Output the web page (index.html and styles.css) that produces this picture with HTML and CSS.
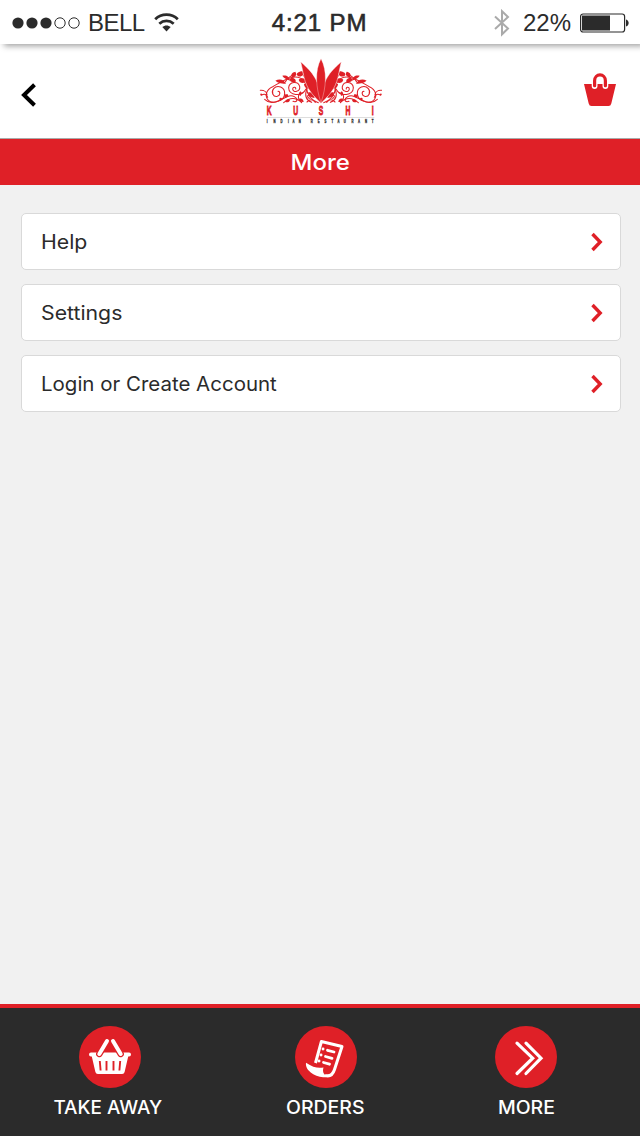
FILE: index.html
```html
<!DOCTYPE html>
<html lang="en">
<head>
<meta charset="utf-8">
<title>More</title>
<link rel="stylesheet" href="styles.css">
</head>
<body>
<div class="screen">
  <div class="status">
    <div class="status-left">
      <svg class="signal" width="68" height="14" viewBox="0 0 68 14"><g fill="#2b2b2b"><circle cx="6" cy="7" r="5.6"/><circle cx="20" cy="7" r="5.6"/><circle cx="34" cy="7" r="5.6"/></g><g fill="none" stroke="#2b2b2b"><circle cx="48" cy="7" r="5.2"/><circle cx="62" cy="7" r="5.2"/></g></svg>
      <span class="carrier">BELL</span>
      <svg class="wifi" width="25" height="20" viewBox="0 0 25 20"><g fill="none" stroke="#2b2b2b" stroke-width="2.8"><path d="M1.2 6.2C7.5.2 17.5.2 23.8 6.2"/><path d="M5.3 10.8C9.5 7 15.5 7 19.7 10.8"/></g><path fill="#2b2b2b" d="M8.3 14.1c2.4-2.2 6-2.2 8.4 0L12.5 18.6z"/></svg>
    </div>
    <span class="clock">4:21 PM</span>
    <div class="status-right">
      <svg width="16" height="28" viewBox="0 0 16 28"><path fill="none" stroke="#aaa" stroke-width="2" d="M1 7.5L14 19.5 8 25.3V2.2L14 8 1 20"/></svg>
      <span class="percent">22%</span>
      <svg class="battery" width="50" height="20" viewBox="0 0 50 20"><rect x=".6" y="1" width="44" height="18" rx="2.5" fill="none" stroke="#2b2b2b" stroke-width="1.2"/><path fill="#2b2b2b" d="M2 2.5h28v15H2zM46 6.5c3.6 1 3.6 6 0 7z"/></svg>
    </div>
  </div>
  <header class="header">
    <svg class="back" width="16" height="24" viewBox="0 0 16 24"><path d="M13.5 1.8L3 12 13.5 22.2" fill="none" stroke="#000" stroke-width="4"/></svg>
    <svg class="logo" width="124" height="68" viewBox="24 24 372 204">
      <defs>
        <g id="vine">
          <g fill="none" stroke="#df2027" stroke-width="3.200" stroke-linecap="round">
            <path d="M205 158C182 150 171 132 169 111C166 87 145 75 119 84C94 93 81 103 68 110C49 118 43 137 55 151C69 164 103 153 104 131C105 111 82 103 71 116C62 127 70 142 82 139C91 136 92 125 84 124"/>
            <path d="M168 117C154 143 116 136 116 113C118 94 144 92 149 109C152 125 129 130 128 117C129 109 139 111 137 117"/>
            <path d="M31 121C42 120 50 126 51 134M35 135C43 130 51 133 53 142M44 148C52 156 63 160 78 155C103 148 117 130 133 140C148 149 139 158 129 154"/>
            <path d="M101 158C120 141 139 143 154 157M155 158C140 143 143 130 159 128M170 118C163 139 169 151 185 157M157 72C166 83 174 92 177 108M106 96C114 81 124 77 132 73"/>
            <path d="M184 139C169 129 171 145 180 145M196 157C187 147 180 147 171 156"/>
          </g>
          <g fill="#df2027">
            <path d="M126 83C119 69 132 66 136 65C142 75 136 81 126 83ZM145 79C132 72 147 64 157 64C163 75 155 82 145 79ZM120 92C105 86 99 81 97 77C109 74 119 80 120 92ZM108 101C91 101 82 97 76 92C89 85 102 89 108 101ZM146 89C154 82 167 83 172 94C160 102 149 100 146 89ZM137 96C118 98 117 88 123 83C133 83 139 88 137 96ZM162 102C172 99 181 106 181 118C170 117 162 111 162 102ZM151 124C145 128 146 135 151 138C156 134 156 128 151 124ZM113 133C103 131 100 138 105 143C112 143 117 138 113 133ZM175 127C187 126 192 133 194 144C180 143 174 137 175 127ZM120 149C111 145 105 151 106 156C113 158 119 156 120 149ZM147 147C154 143 161 149 161 156C153 157 148 154 147 147ZM37 132C31 127 28 134 34 138Z"/>
            <circle cx="92" cy="147" r="4"/>
          </g>
        </g>
      </defs>
      <use href="#vine"/>
      <use href="#vine" transform="translate(426 0) scale(-1 1)"/>
      <path fill="#df2027" stroke="#fff" stroke-width="1.5" d="M213 160C195 142 171 121 162 82C158 63 156 52 152 35C179 60 207 82 213 146C219 82 247 60 274 35C270 52 268 63 264 82C255 121 231 142 213 160Z"/>
      <path fill="#df2027" stroke="#fff" stroke-width="1" d="M213 26C194 62 197 112 213 158C229 112 232 62 213 26Z"/>
      <text class="brand" transform="scale(.52 1)" y="194" x="97 249 397 551 703">KUSHI</text>
      <path d="M52 202.500H373" stroke="#ccc" stroke-width="2"/>
      <text class="tagline" transform="scale(.6 1)" y="219" x="84 117 152 190 212 244 276 304 339 373 407 438 469 507 540 575 609">INDIAN RESTAURANT</text>
    </svg>
    <svg class="bag" width="32" height="33" viewBox="0 0 32 33"><path fill="#df2027" d="M0 11h32L27.300 30.500Q26.700 33 24.500 33H7.500Q5.300 33 4.700 30.500Z"/><path d="M10.600 13V8.200a5.400 6 0 0 1 10.800 0V13" fill="none" stroke="#fff" stroke-width="5.800" stroke-linecap="round"/><path d="M10.600 12.700V7.700a5.400 5.800 0 0 1 10.800 0v5" fill="none" stroke="#df2027" stroke-width="3.200" stroke-linecap="round"/></svg>
  </header>
  <h1 class="title"><span>More</span></h1>
  <main class="list">
    <a class="row"><span class="help">Help</span><svg width="12" height="20" viewBox="0 0 12 20"><path d="M1.500 2L9.200 10 1.500 18" /></svg></a>
    <a class="row"><span class="settings">Settings</span><svg width="12" height="20" viewBox="0 0 12 20"><path d="M1.500 2L9.200 10 1.500 18" /></svg></a>
    <a class="row"><span class="login">Login or Create Account</span><svg width="12" height="20" viewBox="0 0 12 20"><path d="M1.500 2L9.200 10 1.500 18" /></svg></a>
  </main>
  <nav class="tabs">
    <a class="tab takeaway">
      <svg width="62" height="62" viewBox="0 0 62 62"><circle cx="31" cy="31" r="31" fill="#df2027"/><path fill="#fff" d="M12 26.500h38q2 0 2 2t-2 2h-.8L45.600 46q-.5 2-2.500 2H18.900q-2 0-2.500-2L12.800 30.500H12q-2 0-2-2t2-2z"/><path d="M28.500 14.500L20.300 28M33.500 14.500L41.700 28" stroke="#df2027" stroke-width="6.400" stroke-linecap="round"/><path d="M28 15L20.300 28M34 15L41.700 28" stroke="#fff" stroke-width="4" stroke-linecap="round"/><path d="M20.800 35l.8 9.500M27.500 35v9.500M34.500 35v9.500M41.200 35l-.8 9.500" stroke="#df2027" stroke-width="1.900"/></svg>
      <span>TAKE AWAY</span>
    </a>
    <a class="tab orders">
      <svg width="62" height="62" viewBox="0 0 62 62"><circle cx="31" cy="31" r="31" fill="#df2027"/><path d="M20.500 37L26.400 15.500 47 20.500 39.500 43.500Q37 51.500 30 49.500" fill="none" stroke="#fff" stroke-width="3" stroke-linejoin="round"/><path fill="#fff" d="M11 36.700C18 41.500 23 42.500 28.500 41.500C27 46 29 50 34 50.500C27 53.500 9.500 47 11 36.700Z"/><g stroke="#fff" stroke-width="2.800" stroke-linecap="round"><path d="M32.500 24.300l6.500 1.700M30.500 30.500l6.500 1.800M28.500 36.500l6 1.700"/><path d="M28 23h.1M26 29h.1M24 35h.1"/></g></svg>
      <span>ORDERS</span>
    </a>
    <a class="tab more">
      <svg width="62" height="62" viewBox="0 0 62 62"><circle cx="31" cy="31" r="31" fill="#df2027"/><path d="M22 17.200L37.700 32.200 22 47.500M31 17.200L46 32.200 31 47.500" fill="none" stroke="#fff" stroke-width="3.200" stroke-linecap="round"/></svg>
      <span>MORE</span>
    </a>
  </nav>
</div>
</body>
</html>
```
FILE: styles.css
```css
* { box-sizing: border-box; }
body { margin: 0; background: #f1f1f1; font-family: Inter, "Open Sans", sans-serif; color: #2b2b2b; }
svg { display: block; flex: none; }
.screen { height: 1136px; display: flex; flex-direction: column; overflow: hidden; }

.status { height: 44px; flex: none; display: grid; grid-template-columns: 1fr auto 1fr; align-items: center; padding: 1px 10px 0 12px; background: #fff; box-shadow: 4px 2px 6px rgba(0, 0, 0, .38); position: relative; z-index: 1; font-family: "Liberation Sans", Arial, sans-serif; font-size: 24px; line-height: 43px; white-space: nowrap; }
.status-left, .status-right { display: flex; align-items: center; }
.status-right { justify-content: flex-end; }
.carrier { margin-left: 8px; letter-spacing: -.5px; }
.wifi { margin-left: 9px; }
.clock { letter-spacing: .9px; margin-right: 3px; -webkit-text-stroke: .6px #2b2b2b; }
.percent { margin: 0 9px 0 13px; }

.header { height: 95px; flex: none; display: flex; justify-content: space-between; background: #fff; border-bottom: 1px solid #aaa; padding: 0 24px 0 21px; }
.back { margin-top: 39px; }
.logo { margin: 14px 0 0 19px; }
.bag { margin-top: 29px; }
.brand { font: bold 39px "Liberation Sans", Arial, sans-serif; fill: #df2027; stroke: #df2027; stroke-width: 2.5; }
.tagline { font: bold 14px "Liberation Sans", Arial, sans-serif; fill: #2b2b2b; stroke: #2b2b2b; stroke-width: 1; }

.title { height: 46px; flex: none; margin: 0; background: #df2027; color: #fff; font-size: 22px; font-weight: 500; line-height: 46px; text-align: center; }
.title span { display: inline-block; transform: scaleX(1.09); }

.list { flex: 1; display: flex; flex-direction: column; gap: 14px; padding: 28px 19px 0 21px; }
.row { height: 57px; display: flex; align-items: center; justify-content: space-between; padding: 0 17px 0 19px; background: #fff; border: 1px solid #d9d9d9; border-radius: 5px; font-size: 19.5px; }
.row span { transform: scaleX(1.09); transform-origin: left; }
.row path { fill: none; stroke: #df2027; stroke-width: 3.4; }
.row .login { transform: scaleX(1.05); }

.tabs { height: 132px; flex: none; display: grid; grid-template-columns: 216px 216px 188px; border-top: 4px solid #df2027; background: #2b2b2b; }
.tab { display: flex; flex-direction: column; align-items: center; padding-top: 18px; color: #fff; font-size: 18px; font-weight: 500; line-height: 24px; white-space: nowrap; }
.tab svg { margin-bottom: 8px; }
.tab span { transform: scaleX(1.08); }
.takeaway { padding-left: 4px; }
.takeaway span { transform: translateX(-2px) scaleX(1.05); }
.orders { padding-left: 4px; }
.orders span { transform: translateX(-1px) scaleX(1.08); }
```
